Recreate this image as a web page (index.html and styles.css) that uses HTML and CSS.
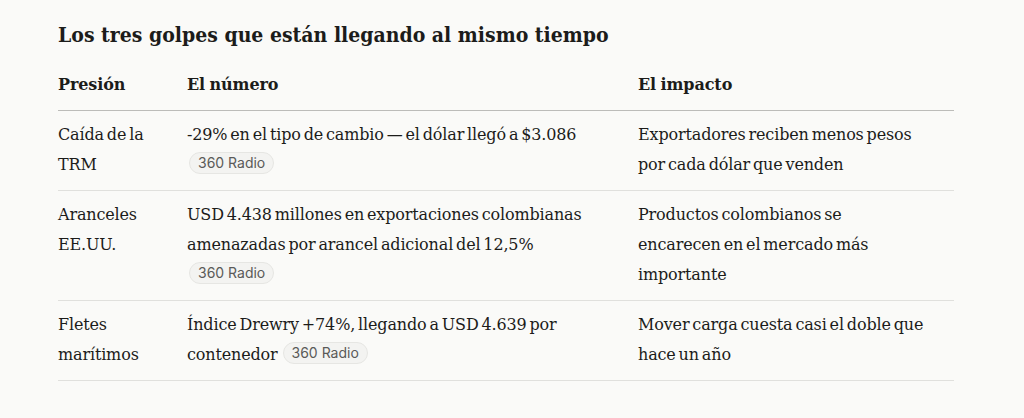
FILE: index.html
```html
<!DOCTYPE html>
<html lang="es">
<head>
<meta charset="utf-8">
<link rel="stylesheet" href="styles.css">
</head>
<body>
<main class="page">
  <h2 class="title">Los tres golpes que están llegando al mismo tiempo</h2>
  <table class="tbl">
    <thead>
      <tr>
        <th class="c1">Presión</th>
        <th class="c2">El número</th>
        <th class="c3">El impacto</th>
      </tr>
    </thead>
    <tbody>
      <tr>
        <td>Caída de la TRM</td>
        <td>-29% en el tipo de cambio — el dólar llegó a $3.086 <span class="pill">360 Radio</span></td>
        <td>Exportadores reciben menos pesos por cada dólar que venden</td>
      </tr>
      <tr>
        <td>Aranceles EE.UU.</td>
        <td>USD 4.438 millones en exportaciones colombianas amenazadas por arancel adicional del 12,5% <span class="pill">360 Radio</span></td>
        <td>Productos colombianos se encarecen en el mercado más importante</td>
      </tr>
      <tr>
        <td>Fletes marítimos</td>
        <td>Índice Drewry +74%, llegando a USD 4.639 por contenedor <span class="pill">360 Radio</span></td>
        <td>Mover carga cuesta casi el doble que hace un año</td>
      </tr>
    </tbody>
  </table>
</main>
</body>
</html>
```
FILE: styles.css
```css
html, body {
  margin: 0;
  padding: 0;
  background: #fafaf8;
}
body {
  font-family: "DejaVu Serif", "Liberation Serif", serif;
  color: #1c1c1a;
}
.page {
  padding: 18px 70px 0 58px;
}
.title {
  margin: 0 0 9px 0;
  font-family: "DejaVu Serif Condensed", "DejaVu Serif", serif;
  font-stretch: condensed;
  font-size: 21px;
  line-height: 34px;
  font-weight: 700;
}
.tbl {
  width: 896px;
  border-collapse: collapse;
  table-layout: fixed;
  font-size: 16px;
  line-height: 30px;
  letter-spacing: -0.15px;
  word-spacing: -2px;
}
.tbl th {
  text-align: left;
  font-weight: 700;
  font-size: 16px;
  letter-spacing: -0.1px;
  word-spacing: -1px;
  padding: 9px 0 10px 0;
  border-bottom: 1px solid #bcbcb9;
}
.tbl td {
  vertical-align: top;
  padding: 9px 0 10px 0;
  border-bottom: 1px solid #e0e0dd;
}
.c1 { width: 129px; }
.c2 { width: 451px; }
.tbl td:nth-child(1) { padding-right: 16px; }
.tbl td:nth-child(2) { padding-right: 36px; }
.tbl td:nth-child(3) { padding-right: 30px; }
.pill {
  display: inline-block;
  margin-left: 2px;
  font-family: "Inter", "Liberation Sans", sans-serif;
  font-size: 14px;
  line-height: 20px;
  letter-spacing: 0;
  word-spacing: 0;
  color: #5a5a58;
  background: #f3f3f1;
  border: 1px solid #e6e6e3;
  border-radius: 11px;
  padding: 0 8px;
  vertical-align: 2px;
}
```
